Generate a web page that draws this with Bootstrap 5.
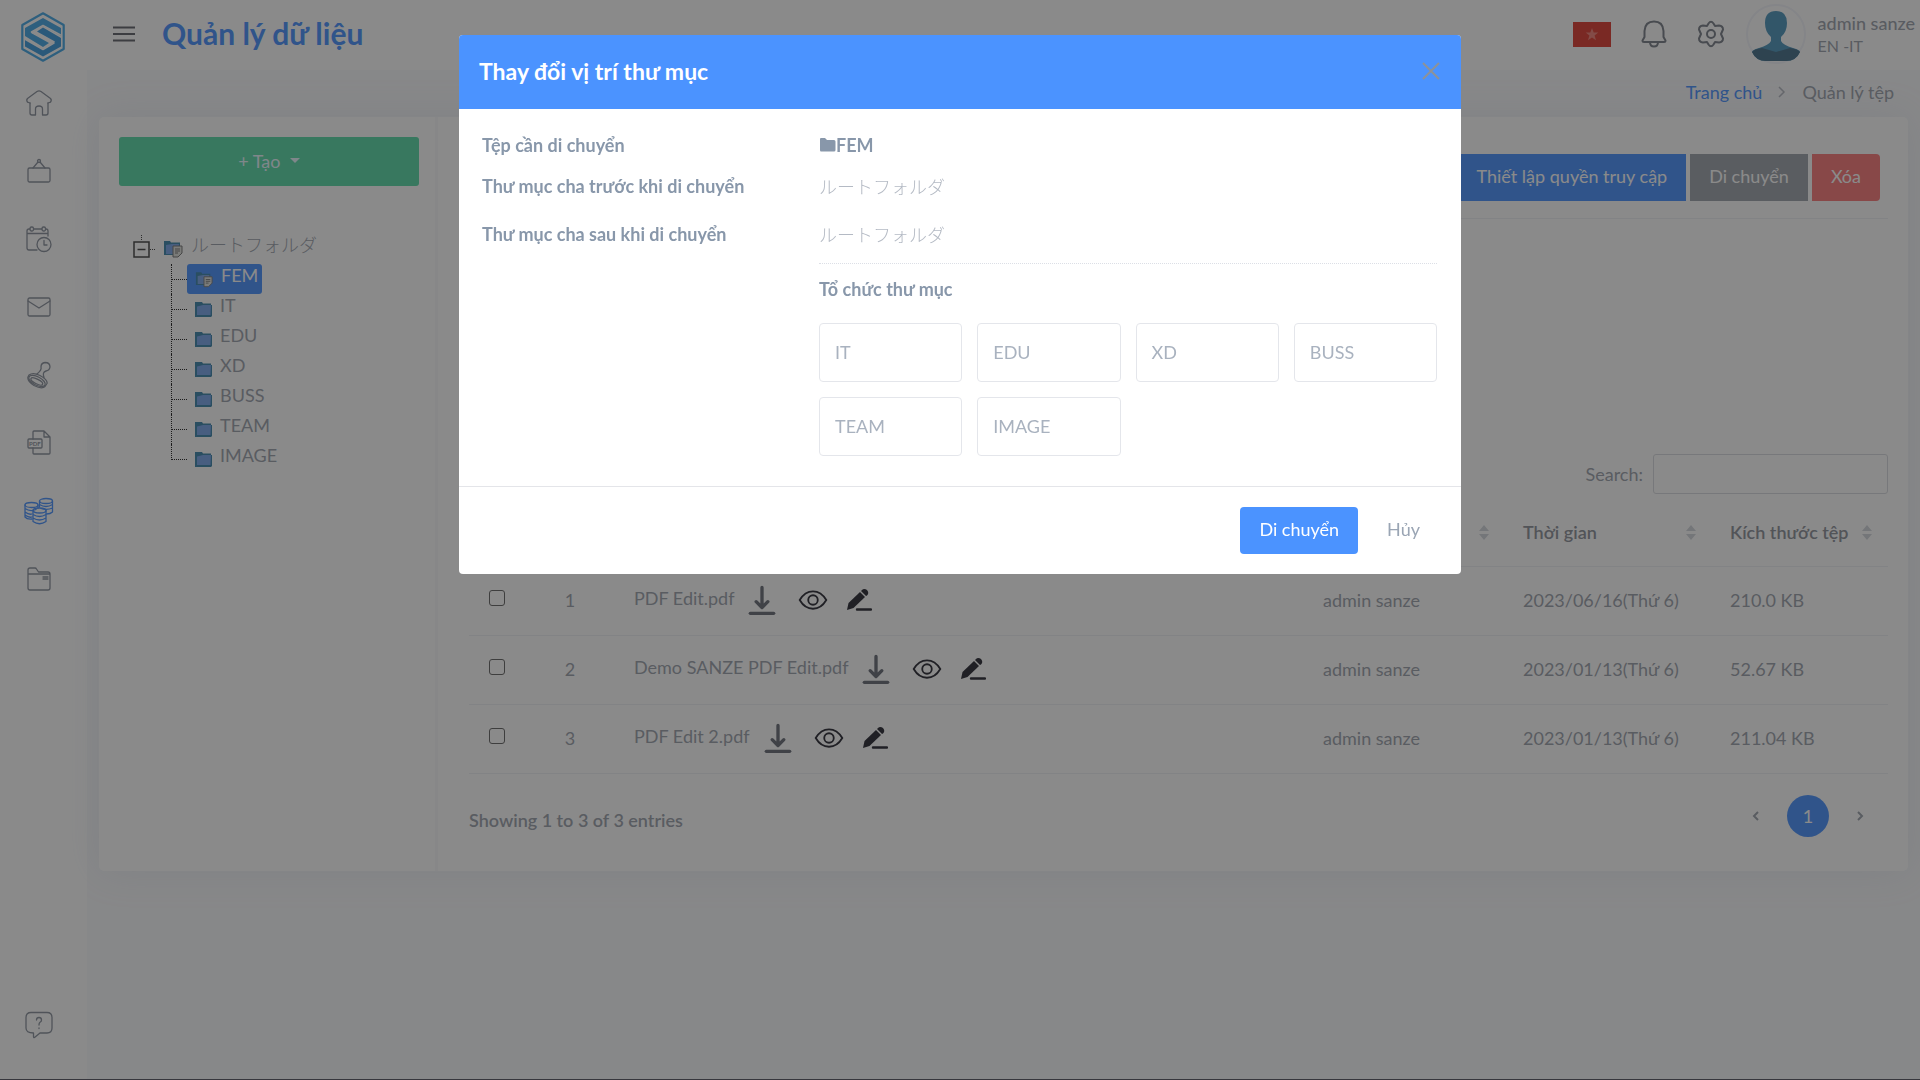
<!DOCTYPE html>
<html lang="vi">
<head>
<meta charset="utf-8">
<meta name="viewport" content="width=device-width, initial-scale=1">
<title>Quản lý dữ liệu</title>
<link href="https://cdn.jsdelivr.net/npm/bootstrap@5.3.0/dist/css/bootstrap.min.css" rel="stylesheet">
<style>
  :root { --brand: #4b93ff; --ink: #9da3ad; --label: #8897aa; --line: #eef0f4; }
  body { font-family: Lato, "Noto Sans CJK JP", sans-serif; font-size: 18px; line-height: 24px; color: var(--ink); background: #f9fafc; overflow: hidden; }
  a { color: inherit; text-decoration: none; }
  .shell { min-height: 100vh; }
  .side-rail { width: 87px; background: #fff; padding: 12px 0 37px; flex: none; }
  .side-rail .brand-mark { margin: 0 0 0 21px; height: 50px; }
  .side-rail .rail-link { height: 36px; width: 36px; margin: 0 0 32px 21px; display: flex; align-items: center; justify-content: center; }
  .side-rail .rail-list { margin-top: 23px; }
  .side-rail svg { fill: none; stroke: #8a919d; stroke-width: 1.3; stroke-linejoin: round; stroke-linecap: round; }
  .rail-link.current svg { stroke: var(--brand); }
  .page-area { min-width: 0; }
  .top-strip { height: 70px; background: #fff; padding: 0 5px 2px 25px; position: relative; }
  .menu-btn { width: 24px; height: 32px; }
  .page-name { font-size: 30px; line-height: 40px; font-weight: 700; color: var(--brand); margin: 0 0 2px 26px; }
  .head-tools { gap: 30px; padding-right: 17px; }
  .user-name { font-size: 18px; line-height: 24px; font-weight: 500; }
  .user-team { font-size: 16px; line-height: 22px; }
  .crumbs { height: 47px; padding: 0 26px 4px 0; }
  .crumbs a { color: var(--brand); }
  .panel { margin: 0 12px; background: #fff; border-radius: 5px; box-shadow: 0 0 40px rgba(150,160,190,.14); min-height: 754px; }
  .tree-side { width: 339px; padding: 20px 16px 0 20px; border-right: 3px solid #f8f8fb; flex: none; }
  .btn-make { height: 49px; background: #5adaa8; color: #e9f8ff; border-radius: 3px; font-size: 18px; border: 0; }
  .tree, .tree ul { list-style: none; margin: 0; padding: 0; }
  .tree { margin-top: 44px; padding-left: 12px; }
  .tree-root { height: 34px; gap: 8px; }
  .tree-root .jp { padding-bottom: 7px; }
  .twig { height: 30px; margin-left: 40px; position: relative; }
  .twig::before { content: ""; position: absolute; left: 0; top: 0; height: 30px; border-left: 1px dotted #222; }
  .twig:last-child::before { height: 16px; }
  .twig::after { content: ""; position: absolute; left: 1px; top: 15px; width: 15px; border-top: 1px dotted #222; }
  .twig a { margin-left: 16px; padding: 0 4px 0 8px; height: 30px; gap: 8px; border-radius: 3px; display: inline-flex; align-items: center; }
  .twig a span { padding-bottom: 8px; }
  .twig a.picked { background: var(--brand); color: #fff; }
  .file-side { padding: 37px 20px 0 31px; min-width: 0; }
  .act { height: 47px; padding: 0 19px 2px; font-size: 18px; border: 0; border-radius: 0; color: #fff; }
  .act-main { background: var(--brand); }
  .act-dull { background: #9fa5ad; }
  .act-warn { background: #fa7b7b; }
  .act-text { color: #9aa5b4; }
  .tool-row { gap: 4px; padding: 0 8px 17px 0; border-bottom: 1px solid var(--line); }
  .find-row { margin-top: 235px; gap: 10px; }
  .find-row input { width: 235px; height: 40px; border: 1px solid #d9dbe0; border-radius: 3px; }
  .files { table-layout: fixed; width: 100%; margin: 4px 0 0; }
  .files th, .files td { padding: 0 0 2px 18px; border-bottom: 1px solid var(--line); vertical-align: middle; }
  .files th { height: 68px; padding-bottom: 0; font-weight: 600; color: #8e929b; }
  .files td { height: 69px; }
  .files .num { padding: 0 0 2px; text-align: center; }
  .files input { width: 16px; height: 16px; margin: 0 0 4px 2px; border-radius: 3px; border: 1px solid #666; background: transparent; appearance: none; display: block; }
  .doc-tools { gap: 17px; }
  .doc-name { gap: 10px; }
  .col-tick { width: 55px; } .col-no { width: 92px; } .col-who { width: 200px; } .col-when { width: 207px; } .col-size { width: 176px; }
  .pager { gap: 27px; padding-right: 24px; }
  .pager .dot { width: 42px; height: 42px; background: var(--brand); color: #fff; border-radius: 50%; }
  .foot-row { padding-top: 21px; }
  .veil { position: fixed; inset: 0; background: rgba(22,22,22,.5); z-index: 1050; }
  .desk-edge { position: fixed; left: 0; right: 0; bottom: 0; height: 1px; background: #37373d; z-index: 1060; }
  .modal-dialog { max-width: 1002px; margin: 35px auto 0; }
  .modal-content { border: 0; border-radius: 4px; color: var(--label); overflow: hidden; }
  .modal-header { height: 74px; background: var(--brand); border: 0; padding: 0 21px 2px 20px; border-radius: 0; }
  .modal-title { font-size: 23px; line-height: 30px; font-weight: 700; color: #fff; }
  .x-btn { width: 18px; height: 18px; }
  .modal-body { padding: 24px 24px 30px 23px; }
  .pair { display: grid; grid-template-columns: 337px 1fr; grid-template-rows: 41px 48px 41px; }
  .pair dt { font-weight: 700; }
  .pair dd { margin: 0; }
  .jp { font-family: "Noto Sans CJK JP", sans-serif; font-weight: 300; }
  .modal .jp { color: #b4bac4; }
  .org-part { margin-left: 337px; border-top: 1px dotted #dcdfe6; padding-top: 12px; }
  .org-part h2 { font-size: 18px; line-height: 26px; font-weight: 700; margin: 0 0 21px; }
  .tiles { display: grid; grid-template-columns: repeat(4, 1fr); gap: 15px; }
  .tile { height: 59px; border: 1px solid #e4e6eb; border-radius: 4px; background: #fff; color: #a9b2bf; text-align: left; padding: 0 15px 2px; font-size: 18px; }
  .modal-footer { padding: 20px 22px 21px; height: 88px; border-top: 1px solid #e4e5e9; gap: 10px; }
  .modal-footer > * { margin: 0; }
</style>
<script src="https://cdn.jsdelivr.net/npm/bootstrap@5.3.0/dist/js/bootstrap.bundle.min.js"></script>
</head>
<body>
<svg width="0" height="0" class="position-absolute" aria-hidden="true">
  <symbol id="folder" viewBox="0 0 17 15"><path d="M0 0h7l1 1.500h8V3h1v11l-1 1H0z" fill="#3f86ac"/><path d="M2 4.500l6-1.500h8L15.500 13H2z" fill="#7aa6ea"/></symbol>
  <symbol id="folder-doc" viewBox="0 0 20 18"><path d="M1 1h6l1 1.500h9V15H1z" fill="#3f86ac"/><path d="M3 5l6-1h7l-1 10H3z" fill="#7aa6ea"/><path d="M10 6h9v7l-4 4h-5z" fill="#dfe0dc" stroke="#777"/><path d="M12 9h5M12 11h5M12 13h3" stroke="#777"/></symbol>
  <symbol id="down" viewBox="0 0 32 36"><path d="M16 3v24M9 20l7 7 7-7" fill="none" stroke="#6a6e79" stroke-width="4" stroke-linecap="round" stroke-linejoin="round"/><path d="M2 34h28" stroke="#6a6e79" stroke-width="4" stroke-linecap="round"/></symbol>
  <symbol id="eye" viewBox="0 0 32 24"><path d="M1.500 12C5 6 10 2.500 16 2.500S27 6 30.500 12C27 18 22 21.500 16 21.500S5 18 1.500 12z" fill="none" stroke="#2b2b35" stroke-width="2"/><circle cx="16" cy="12" r="5.200" fill="none" stroke="#2b2b35" stroke-width="2"/></symbol>
  <symbol id="pen" viewBox="0 0 26 24"><path d="M1 22l1.500-7L14 4l5 5L7.500 20z" fill="#2b2b35"/><path d="M15.500 2.500Q18 0 21 2q2.500 3 0 5.500l-1 .5-5-5z" fill="#2b2b35"/><path d="M11 21.500h14" stroke="#2b2b35" stroke-width="2.400" stroke-linecap="round"/></symbol>
  <symbol id="sort" viewBox="0 0 10 16"><path d="M0 7l5-6 5 6zM0 10h10l-5 6z" fill="#d3d6dc"/></symbol>
</svg>

<div class="shell d-flex">
  <nav class="side-rail d-flex flex-column" aria-label="Menu">
    <a class="brand-mark" href="#" aria-label="Sanze"><svg width="44" height="50" viewBox="0 0 44 50"><path d="M22 1.300L42.700 13v24L22 48.700 1.300 37V13z" stroke="#47a9e6" stroke-width="2.200"/><path d="M22 6l18 10v8L22 14 11 20l-1 1 18 10-6 4L4 24v-8z" fill="#47a9e6" stroke="none"/><path d="M22 44.500L4 34.500V27l18 10 11-6.500 1-1L16 19.500l6-4L40 26v8.500z" fill="#3e9cde" stroke="none"/><path d="M39.500 23L22 13.500 10.500 20 33 31l-11 6.500L4.500 27.500" stroke="#fff" stroke-width="1.600"/></svg></a>
    <div class="rail-list d-flex flex-column flex-grow-1">
      <a class="rail-link" href="#" aria-label="Trang chủ"><svg width="28" height="28" viewBox="0 0 28 28"><path d="M5 14v10q0 2 2 2h3.500v-6q0-3 3.500-3t3.500 3v6H21q2 0 2-2V14"/><path d="M5 14l-2.500-.8Q1 11 2.500 9.500L12 2.500q2-1.300 4 0l9.500 7q1.500 1.500 0 3.700L23 14"/></svg></a>
      <a class="rail-link" href="#" aria-label="Công việc"><svg width="28" height="28" viewBox="0 0 28 28"><rect x="3" y="11" width="22" height="14" rx="1.500"/><path d="M8 11l5-6M20 11l-5-6"/><circle cx="14" cy="4" r="1.500"/></svg></a>
      <a class="rail-link" href="#" aria-label="Lịch"><svg width="28" height="28" viewBox="0 0 28 28"><path d="M12 25H4q-2 0-2-2V6q0-2 2-2h1m4 0h8m4 0q2 0 2 2v5M2 8.500h21"/><rect x="5" y="2" width="3.500" height="4" rx="1.500"/><rect x="17" y="2" width="3.500" height="4" rx="1.500"/><circle cx="19" cy="19.500" r="7"/><path d="M19 15.500V20h3"/></svg></a>
      <a class="rail-link" href="#" aria-label="Thư"><svg width="28" height="28" viewBox="0 0 28 28"><rect x="3" y="5" width="22" height="18" rx="1.500"/><path d="M3 8l11 7 11-7"/></svg></a>
      <a class="rail-link" href="#" aria-label="Con dấu"><svg width="28" height="28" viewBox="0 0 28 28"><path d="M12 13q5-4 4-7 0-4 4-4.500 5 0 5 4.500-.5 3.500-4 4-4 1-2 6.500"/><path d="M4 14q4-3 11 0.500 8 4.500 7 8l-2 3q-3 3-11-1Q2 20 3 16z"/><ellipse cx="12" cy="20" rx="9" ry="4.200" transform="rotate(27 12 20)"/><ellipse cx="12" cy="20.500" rx="6.500" ry="2.300" transform="rotate(27 12 20)"/></svg></a>
      <a class="rail-link" href="#" aria-label="PDF"><svg width="28" height="28" viewBox="0 0 28 28"><path d="M8 10V3q0-1 1-1h10l6 6v16q0 1-1 1H9q-1 0-1-1v-5M19 2v6h6"/><rect x="3" y="10" width="14" height="9" rx="1"/><text x="4" y="17" font-size="6" font-weight="700" fill="#8a919d" stroke="none">PDF</text></svg></a>
      <a class="rail-link current" href="#" aria-label="Dữ liệu"><svg width="30" height="28" viewBox="0 0 30 28"><ellipse cx="22" cy="4" rx="6.500" ry="2.500"/><path d="M15.500 4v6M28.500 4v11q-2 2-6 2M15.500 7.500q6.500 4 13 0M17 11.500q6 2 11.500-.5"/><ellipse cx="7.500" cy="8" rx="6.500" ry="2.500"/><path d="M1 8v12q2 2.500 7 2M1 11.500q5 3.500 11 1M1 15q4 3 7 2M1 18q4 3 7 2M14 8v3"/><ellipse cx="15.500" cy="13.500" rx="6.500" ry="2.500"/><path d="M9 13.500v11q6.500 4.500 13 0v-11M9 17.500q6.500 4 13 0M9 21q6.500 4 13 0"/></svg></a>
      <a class="rail-link" href="#" aria-label="Thư mục"><svg width="28" height="28" viewBox="0 0 28 28"><path d="M3 9V5q0-2 2-2h5q1 0 1.500 1l2 3H23q2 0 2 2v14q0 2-2 2H5q-2 0-2-2zM3 9h22"/><path d="M18 12h5M18 14h5"/></svg></a>
      <a class="rail-link mt-auto mb-0" href="#" aria-label="Trợ giúp"><svg width="28" height="28" viewBox="0 0 28 28"><path d="M6 1.500h16q5 0 5 5V17q0 5-5 5h-7l-5.500 4.500q-1 .5-1-1V22Q1 22 1 17V6.500q0-5 5-5z"/><path d="M11.500 9q0-2.500 2.500-2.500t2.500 2.500q0 1.500-1.500 2.300-1 .7-1 2.700M14 17v.5"/></svg></a>
    </div>
  </nav>

  <div class="page-area flex-grow-1 d-flex flex-column">
    <header class="top-strip d-flex align-items-center">
      <button class="menu-btn btn p-0 border-0 d-flex align-items-center" type="button" aria-label="Menu"><svg width="24" height="16" viewBox="0 0 24 16"><path d="M1 1.500h22M1 8h22M1 14.500h22" stroke="#62646c" stroke-width="2"/></svg></button>
      <h1 class="page-name">Quản lý dữ liệu</h1>
      <div class="ms-auto d-flex align-items-center">
        <div class="head-tools d-flex align-items-center">
          <svg width="38" height="25" viewBox="0 0 38 25"><path d="M0 0h38v25H0z" fill="#de3d32"/><path d="M19 6l1.700 4.600h4.600l-3.700 3 1.400 4.700-4-2.800-4 2.800 1.400-4.700-3.700-3h4.600z" fill="#f08078"/></svg>
          <svg width="26" height="28" viewBox="0 0 26 28" fill="none" stroke="#7b808a" stroke-width="2" stroke-linejoin="round"><path d="M3.500 17V11Q4 1.500 13 1.500T22.500 11v6l2 3.500q0 1.500-1.500 1.500H3q-1.500 0-1.500-1.500zM9 22q0 4.500 4 4.500t4-4.500"/></svg>
          <svg width="28" height="28" viewBox="0 0 28 28" fill="none" stroke="#7b808a" stroke-width="2" stroke-linejoin="round"><path d="M11.500 3.500Q14 0 16.500 3.500L18 6l4-.5Q26 6 26 9.500L24 14l2 4.500q0 3.500-4 4L18 22l-1.500 2.500Q14 28 11.500 24.500L10 22l-4 .5q-4-.5-4-4L4 14 2 9.500Q2 6 6 5.500l4 .5z"/><circle cx="14" cy="14" r="4"/></svg>
        </div>
        <svg class="ms-1" width="60" height="60" viewBox="0 0 60 60"><circle cx="30" cy="30" r="29" fill="#fff" stroke="#f3f4fa" stroke-width="2"/><path d="M30 7q11 0 11 12 0 9-6 14v4q2 4 12 7 7 2 7 4-4 9-14 9H20Q10 57 6 48q0-2 7-4 10-3 12-7v-4q-6-5-6-14Q19 7 30 7z" fill="#4f96bd"/><path d="M6 48q2-3 10-4l14 4 14-4q8 1 10 4-4 9-14 9H20Q10 57 6 48z" fill="#47708a"/></svg>
        <div class="ps-2 ms-1">
          <div class="user-name">admin sanze</div>
          <div class="user-team">EN -IT</div>
        </div>
      </div>
    </header>

    <nav class="crumbs d-flex justify-content-end align-items-center" aria-label="breadcrumb">
      <a href="#">Trang chủ</a>
      <svg class="mx-3" width="8" height="12" viewBox="0 0 8 12"><path d="M1 1l5 5-5 5" fill="none" stroke="#b6bac2" stroke-width="1.500"/></svg>
      <span>Quản lý tệp</span>
    </nav>

    <main class="panel d-flex">
      <section class="tree-side">
        <button class="btn-make btn w-100 dropdown-toggle" type="button">+ Tạo&nbsp;</button>
        <ul class="tree">
          <li>
            <div class="tree-root d-flex align-items-center">
              <svg width="24" height="24" viewBox="0 0 24 24"><rect x="3" y="7" width="15" height="15" fill="none" stroke="#444" stroke-width="1.500"/><path d="M6.500 14.500h8" stroke="#444" stroke-width="1.500"/><path d="M10.500 0v6M19 14.500h5" stroke="#444" stroke-dasharray="1 1"/></svg>
              <svg width="20" height="18" class="mt-1"><use href="#folder-doc"/></svg>
              <span class="jp">ルートフォルダ</span>
            </div>
            <ul>
              <li class="twig"><a class="picked" href="#"><svg width="18" height="17"><use href="#folder-doc"/></svg><span>FEM</span></a></li>
              <li class="twig"><a href="#"><svg width="17" height="15"><use href="#folder"/></svg><span>IT</span></a></li>
              <li class="twig"><a href="#"><svg width="17" height="15"><use href="#folder"/></svg><span>EDU</span></a></li>
              <li class="twig"><a href="#"><svg width="17" height="15"><use href="#folder"/></svg><span>XD</span></a></li>
              <li class="twig"><a href="#"><svg width="17" height="15"><use href="#folder"/></svg><span>BUSS</span></a></li>
              <li class="twig"><a href="#"><svg width="17" height="15"><use href="#folder"/></svg><span>TEAM</span></a></li>
              <li class="twig"><a href="#"><svg width="17" height="15"><use href="#folder"/></svg><span>IMAGE</span></a></li>
            </ul>
          </li>
        </ul>
      </section>

      <section class="file-side flex-grow-1">
        <div class="tool-row d-flex justify-content-end">
          <button class="act act-main btn" type="button">Thiết lập quyền truy cập</button>
          <button class="act act-dull btn" type="button">Di chuyển</button>
          <button class="act act-warn btn rounded-end-1" type="button">Xóa</button>
        </div>
        <div class="find-row d-flex justify-content-end align-items-center">
          <label for="q">Search:</label>
          <input id="q" type="search">
        </div>
        <table class="files">
          <colgroup><col class="col-tick"><col class="col-no"><col><col class="col-who"><col class="col-when"><col class="col-size"></colgroup>
          <thead><tr>
            <th></th><th></th><th></th>
            <th><div class="d-flex justify-content-end pe-3"><svg width="10" height="16"><use href="#sort"/></svg></div></th>
            <th><div class="d-flex justify-content-between align-items-center pe-3">Thời gian<svg width="10" height="16"><use href="#sort"/></svg></div></th>
            <th><div class="d-flex justify-content-between align-items-center pe-3">Kích thước tệp<svg width="10" height="16"><use href="#sort"/></svg></div></th>
          </tr></thead>
          <tbody>
            <tr><td><input type="checkbox" aria-label="1"></td><td class="num">1</td><td><div class="doc-tools d-flex align-items-center"><div class="doc-name d-flex align-items-center"><span class="mb-1">PDF Edit.pdf</span><svg width="36" height="30"><use href="#down"/></svg></div><svg width="32" height="22"><use href="#eye"/></svg><svg width="26" height="24"><use href="#pen"/></svg></div></td><td>admin sanze</td><td>2023/06/16(Thứ 6)</td><td>210.0 KB</td></tr>
            <tr><td><input type="checkbox" aria-label="2"></td><td class="num">2</td><td><div class="doc-tools d-flex align-items-center"><div class="doc-name d-flex align-items-center"><span class="mb-1">Demo SANZE PDF Edit.pdf</span><svg width="36" height="30"><use href="#down"/></svg></div><svg width="32" height="22"><use href="#eye"/></svg><svg width="26" height="24"><use href="#pen"/></svg></div></td><td>admin sanze</td><td>2023/01/13(Thứ 6)</td><td>52.67 KB</td></tr>
            <tr><td><input type="checkbox" aria-label="3"></td><td class="num">3</td><td><div class="doc-tools d-flex align-items-center"><div class="doc-name d-flex align-items-center"><span class="mb-1">PDF Edit 2.pdf</span><svg width="36" height="30"><use href="#down"/></svg></div><svg width="32" height="22"><use href="#eye"/></svg><svg width="26" height="24"><use href="#pen"/></svg></div></td><td>admin sanze</td><td>2023/01/13(Thứ 6)</td><td>211.04 KB</td></tr>
          </tbody>
        </table>
        <div class="foot-row d-flex justify-content-between align-items-center">
          <div class="fw-semibold pt-2">Showing 1 to 3 of 3 entries</div>
          <div class="pager d-flex align-items-center">
            <a class="d-flex" href="#" aria-label="Trước"><svg width="8" height="12" viewBox="0 0 8 12"><path d="M6 2L2 6l4 4" fill="none" stroke="#9da3ad" stroke-width="2"/></svg></a>
            <a class="dot d-flex align-items-center justify-content-center" href="#">1</a>
            <a class="d-flex" href="#" aria-label="Sau"><svg width="8" height="12" viewBox="0 0 8 12"><path d="M2 2l4 4-4 4" fill="none" stroke="#9da3ad" stroke-width="2"/></svg></a>
          </div>
        </div>
      </section>
    </main>
  </div>
</div>

<div class="veil"></div>
<div class="modal show d-block" tabindex="-1" role="dialog" aria-labelledby="dlg-title">
  <div class="modal-dialog">
    <div class="modal-content">
      <div class="modal-header">
        <h2 class="modal-title" id="dlg-title">Thay đổi vị trí thư mục</h2>
        <button class="x-btn btn p-0 border-0 d-flex ms-auto" type="button" aria-label="Đóng"><svg width="18" height="18" viewBox="0 0 18 18"><path d="M1 1l16 16M17 1L1 17" stroke="#8d9299" stroke-width="2"/></svg></button>
      </div>
      <div class="modal-body">
        <dl class="pair m-0">
          <dt>Tệp cần di chuyển</dt>
          <dd class="fw-bold"><svg width="17" height="14" viewBox="0 0 17 14" class="mb-1"><path d="M1 1q0-1 1-1h4l2 2h7q1.500 0 1.500 1.500V12q0 1.500-1.500 1.500H2Q1 13.500 1 12z" fill="#8897aa"/></svg>FEM</dd>
          <dt>Thư mục cha trước khi di chuyển</dt>
          <dd class="jp">ルートフォルダ</dd>
          <dt>Thư mục cha sau khi di chuyển</dt>
          <dd class="jp">ルートフォルダ</dd>
        </dl>
        <div class="org-part">
          <h2>Tổ chức thư mục</h2>
          <div class="tiles">
            <button class="tile" type="button">IT</button>
            <button class="tile" type="button">EDU</button>
            <button class="tile" type="button">XD</button>
            <button class="tile" type="button">BUSS</button>
            <button class="tile" type="button">TEAM</button>
            <button class="tile" type="button">IMAGE</button>
          </div>
        </div>
      </div>
      <div class="modal-footer">
        <button class="act act-main btn rounded-1" type="button">Di chuyển</button>
        <button class="act act-text btn" type="button">Hủy</button>
      </div>
    </div>
  </div>
</div>
<div class="desk-edge"></div>
</body>
</html>
